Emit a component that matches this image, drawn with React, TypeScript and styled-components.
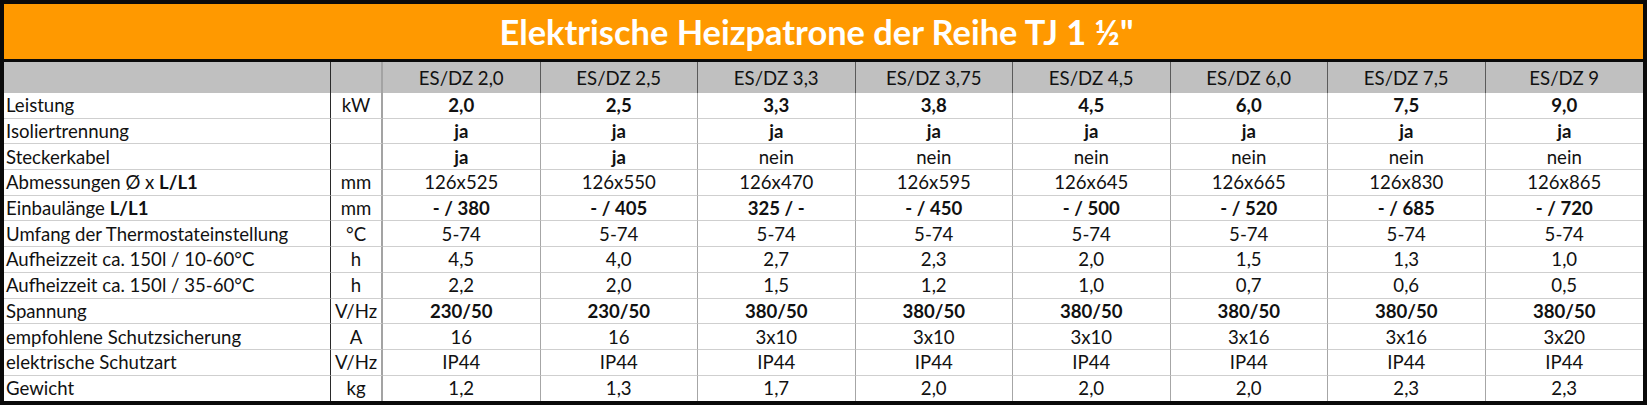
import { createGlobalStyle, styled } from "styled-components";
import type { ReactNode } from "react";

const GlobalStyle = createGlobalStyle`
    html, body {
        margin: 0;
        padding: 0;
        background: #ffffff;
    }
    body {
        font-family: Lato, "Open Sans", sans-serif;
        color: #111111;
    }
`;

const Sheet = styled.div`
    width: 1647px;
    box-sizing: border-box;
    border: 4px solid #0a0a0a;
`;

const TitleBar = styled.div`
    height: 55px;
    background: #ff9900;
    border-bottom: 3px solid #0a0a0a;
    display: flex;
    align-items: center;
    justify-content: center;
    padding-right: 14px;
    color: #ffffff;
    font-weight: 700;
    font-size: 34.4px;
`;

const Grid = styled.div`
    display: grid;
    grid-template-columns: 327px 52px repeat(8, 1fr);
`;

const Cell = styled.div<{ $kind: "label" | "unit" | "value"; $head?: boolean; $last?: boolean; $bold?: boolean }>`
    box-sizing: border-box;
    height: ${(p) => (p.$head ? "31px" : "25.7px")};
    display: flex;
    align-items: center;
    justify-content: ${(p) => (p.$kind === "label" ? "flex-start" : "center")};
    padding-left: ${(p) => (p.$kind === "label" ? "2px" : "0")};
    background: ${(p) => (p.$head ? "#c0c0c0" : "#ffffff")};
    font-size: 18.6px;
    font-weight: ${(p) => (p.$bold ? 700 : 400)};
    white-space: pre;
    border-bottom: ${(p) => (p.$head || p.$last ? "none" : "1px solid #cfcfcf")};
    border-right: ${(p) =>
        p.$kind === "label"
            ? "1px solid #2a2a2a"
            : p.$kind === "unit"
            ? "2px solid #a3a3a3"
            : p.$head
            ? "1px solid #5a5a5a"
            : "1px solid #a6a6a6"};

    &:nth-child(10n) {
        border-right: none;
    }
`;

const Strong = styled.b`
    font-weight: 700;
`;

type Row = {
    label: ReactNode;
    unit: string;
    values: string[];
    bold?: boolean;
};

const models = ["ES/DZ 2,0", "ES/DZ 2,5", "ES/DZ 3,3", "ES/DZ 3,75", "ES/DZ 4,5", "ES/DZ 6,0", "ES/DZ 7,5", "ES/DZ 9"];

const rows: Row[] = [
    { label: "Leistung", unit: "kW", values: ["2,0", "2,5", "3,3", "3,8", "4,5", "6,0", "7,5", "9,0"], bold: true },
    { label: "Isoliertrennung", unit: "", values: Array(8).fill("ja"), bold: true },
    { label: "Steckerkabel", unit: "", values: ["ja", "ja", "nein", "nein", "nein", "nein", "nein", "nein"] },
    {
        label: <span>Abmessungen Ø x <Strong>L/L1</Strong></span>,
        unit: "mm",
        values: ["126x525", "126x550", "126x470", "126x595", "126x645", "126x665", "126x830", "126x865"],
    },
    {
        label: <span>Einbaulänge <Strong>L/L1</Strong></span>,
        unit: "mm",
        values: ["- / 380", "- / 405", "325 / -", "- / 450", "- / 500", "- / 520", "- / 685", "- / 720"],
        bold: true,
    },
    { label: "Umfang der Thermostateinstellung", unit: "°C", values: Array(8).fill("5-74") },
    { label: "Aufheizzeit ca. 150l / 10-60°C", unit: "h", values: ["4,5", "4,0", "2,7", "2,3", "2,0", "1,5", "1,3", "1,0"] },
    { label: "Aufheizzeit ca. 150l / 35-60°C", unit: "h", values: ["2,2", "2,0", "1,5", "1,2", "1,0", "0,7", "0,6", "0,5"] },
    { label: "Spannung", unit: "V/Hz", values: ["230/50", "230/50", "380/50", "380/50", "380/50", "380/50", "380/50", "380/50"], bold: true },
    { label: "empfohlene Schutzsicherung", unit: "A", values: ["16", "16", "3x10", "3x10", "3x10", "3x16", "3x16", "3x20"] },
    { label: "elektrische Schutzart", unit: "V/Hz", values: Array(8).fill("IP44") },
    { label: "Gewicht", unit: "kg", values: ["1,2", "1,3", "1,7", "2,0", "2,0", "2,0", "2,3", "2,3"] },
];

export default function App() {
    return (
        <>
            <GlobalStyle />
            <Sheet>
                <TitleBar>Elektrische Heizpatrone der Reihe TJ 1 ½"</TitleBar>
                <Grid>
                    <Cell $kind="label" $head />
                    <Cell $kind="unit" $head />
                    {models.map((m) => (
                        <Cell $kind="value" $head key={m}>{m}</Cell>
                    ))}
                    {rows.map((row, r) => {
                        const last = r === rows.length - 1;
                        return [
                            <Cell $kind="label" $last={last} key={`l${r}`}>{row.label}</Cell>,
                            <Cell $kind="unit" $last={last} key={`u${r}`}>{row.unit}</Cell>,
                            ...row.values.map((v, i) => (
                                <Cell $kind="value" $last={last} $bold={row.bold || v === "ja"} key={`v${r}-${i}`}>
                                    {v}
                                </Cell>
                            )),
                        ];
                    })}
                </Grid>
            </Sheet>
        </>
    );
}
